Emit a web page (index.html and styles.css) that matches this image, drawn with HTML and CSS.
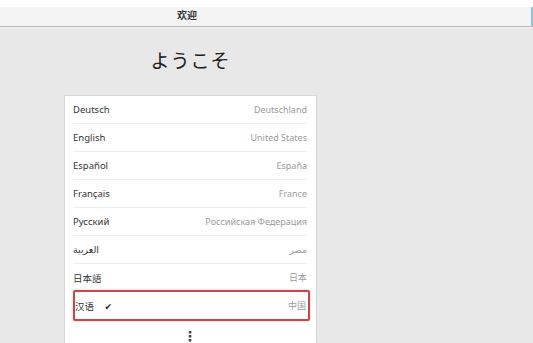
FILE: index.html
```html
<!DOCTYPE html>
<html lang="zh">
<head>
  <meta charset="UTF-8">
  <meta name="viewport" content="width=device-width, initial-scale=1.0">
  <title>欢迎</title>
  <link rel="stylesheet" href="styles.css">
</head>
<body>
  <div class="top_strip"></div>
  <div class="header">
    <div class="header_title">欢迎</div>
    <div class="header_edge"></div>
  </div>

  <div class="main">
    <div class="col">
      <h1 class="welcome">ようこそ</h1>

      <ul class="lang_list">
        <li><span class="lang">Deutsch</span><span class="region">Deutschland</span></li>
        <li><span class="lang">English</span><span class="region">United States</span></li>
        <li><span class="lang">Español</span><span class="region">España</span></li>
        <li><span class="lang">Français</span><span class="region">France</span></li>
        <li><span class="lang">Русский</span><span class="region">Российская Федерация</span></li>
        <li><span class="lang">العربية</span><span class="region">مصر</span></li>
        <li><span class="lang">日本語</span><span class="region">日本</span></li>
        <li class="selected"><span class="lang">汉语 <span class="check">✔</span></span><span class="region">中国</span></li>
        <li class="more"><span class="dots">⋮</span></li>
      </ul>
    </div>
  </div>
</body>
</html>
```

FILE: styles.css
```css
*{margin: 0; padding: 0; box-sizing: border-box;}
html, body{
  width: 533px;
  height: 343px;
  overflow: hidden;
}
body{
  background: #e8e8e8;
  font-family: "Noto Sans", "Noto Sans CJK SC", "DejaVu Sans", sans-serif;
  color: #333;
}
.top_strip{
  height: 7px;
  background: #fff;
}
.header{
  display: flex;
  height: 20px;
  background: #f4f4f4;
  border-bottom: 1px solid #b9b9b9;
  box-shadow: 0 1px 0 #f0f0f0;
}
.header_title{
  width: 374px;
  text-align: center;
  font-size: 10px;
  line-height: 16px;
  font-weight: bold;
  color: #333;
}
.header_edge{
  margin-left: auto;
  width: 2px;
  background: #8fc3dc;
}
.main{
  display: flex;
}
.col{
  width: 381px;
  display: flex;
  flex-direction: column;
  align-items: center;
}
.welcome{
  margin-top: 20px;
  font-size: 19px;
  font-weight: normal;
  letter-spacing: 1px;
  line-height: 28px;
  color: #222;
}
.lang_list{
  margin-top: 20px;
  width: 253px;
  list-style: none;
  background: #fff;
  border: 1px solid #d6d6d6;
  border-bottom: none;
  padding: 0 9px 0 8px;
}
.lang_list > li{
  display: flex;
  justify-content: space-between;
  align-items: center;
  height: 28px;
  border-bottom: 1px solid #ececec;
}
.lang{
  font-size: 9.5px;
  color: #333;
}
.region{
  font-size: 9px;
  color: #9a9a9a;
}
.lang_list > li.selected{
  border: 2px solid #c9474b;
  border-radius: 2px;
  box-shadow: 0 0 2px rgba(230, 120, 120, .6);
  height: 31px;
  margin-top: -2px;
  margin-right: -3px;
  padding-right: 2px;
}
.check{
  margin-left: 8px;
  font-size: 9px;
  color: #222;
}
.lang_list > li.more{
  justify-content: center;
  border-bottom: none;
}
.dots{
  font-size: 14px;
  font-weight: bold;
  color: #444;
}
```
